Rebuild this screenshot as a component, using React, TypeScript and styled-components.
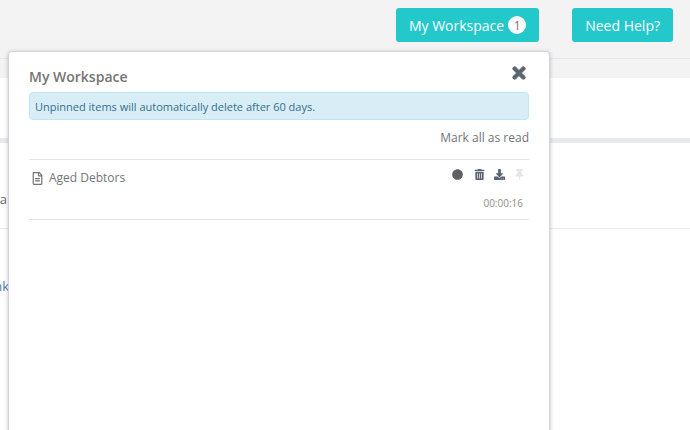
import React from 'react'
import styled, { createGlobalStyle } from 'styled-components'
import { FaCircle, FaDownload, FaRegFileAlt, FaThumbtack, FaTimes, FaTrashAlt } from 'react-icons/fa'

const GlobalStyle = createGlobalStyle`
  html, body {
    margin: 0;
    padding: 0;
    height: 100%;
    overflow: hidden;
    background: #fff;
    font-family: "Open Sans", "Liberation Sans", sans-serif;
  }
`

const Page = styled.div`
  position: relative;
  width: 690px;
  height: 430px;
  overflow: hidden;
`

const TopBar = styled.header`
  display: flex;
  justify-content: flex-end;
  align-items: flex-start;
  gap: 33px;
  box-sizing: border-box;
  height: 59px;
  padding: 8px 17px 0 0;
  background: #f3f3f4;
  border-bottom: 1px solid #e7e7e9;
`

const SubBar = styled.div`
  height: 19px;
  background: #f3f3f4;
`

const TopButton = styled.button`
  display: flex;
  align-items: center;
  gap: 4px;
  height: 34px;
  padding: 0 13px;
  border: none;
  border-radius: 3px;
  background: #23c8cb;
  color: #fff;
  font: 14px "Open Sans", sans-serif;
`

const Count = styled.span`
  display: flex;
  align-items: center;
  justify-content: center;
  width: 18px;
  height: 18px;
  border-radius: 50%;
  background: #fff;
  color: #6f7479;
  font-size: 12px;
`

const Band = styled.section`
  height: 60px;
`

const Strip = styled.div`
  height: 5px;
  background: #e6e9ed;
`

const BackRow = styled.div`
  display: flex;
  box-sizing: border-box;
  width: 100%;
  height: 86px;
  padding-top: 47px;
  border-bottom: 1px solid #e7eaec;
`

const ClippedCell = styled.div<{ $blue?: boolean }>`
  display: flex;
  justify-content: flex-end;
  width: ${p => (p.$blue ? 9 : 7)}px;
  white-space: nowrap;
  font-size: 13px;
  line-height: 18px;
  color: ${p => (p.$blue ? '#4a7db5' : '#676a6c')};
`

const LinkRow = styled.div`
  display: flex;
  padding-top: 48px;
`

const Popup = styled.aside`
  position: absolute;
  left: 8px;
  top: 51px;
  box-sizing: border-box;
  width: 542px;
  height: 400px;
  padding: 0 20px;
  background: #fff;
  border-radius: 4px;
  border: 1px solid #d3d4d9;
  box-shadow: 0 1px 4px rgba(90, 90, 110, 0.35);
`

const PopupHeader = styled.div`
  display: flex;
  justify-content: space-between;
  align-items: flex-start;
  height: 40px;
  padding-top: 15px;
  box-sizing: border-box;
`

const Title = styled.h3`
  margin: 0;
  font-size: 14px;
  line-height: 19px;
  font-weight: 600;
  color: #767474;
`

const CloseIcon = styled(FaTimes)`
  width: 16px;
  height: 18px;
  margin: -3px 2px 0 0;
  color: #5d6670;
  stroke: #5d6670;
  stroke-width: 30px;
`

const Notice = styled.div`
  box-sizing: border-box;
  height: 28px;
  padding: 0 5px;
  display: flex;
  align-items: center;
  background: #d9edf7;
  border: 1px solid #bce8f1;
  border-radius: 4px;
  color: #31708f;
  font-size: 11px;
`

const MarkRead = styled.div`
  text-align: right;
  margin-top: 9px;
  height: 30px;
  font-size: 12px;
  line-height: 18px;
  color: #6f7479;
`

const Item = styled.div`
  box-sizing: border-box;
  height: 61px;
  padding: 9px 6px 0 3px;
  border-top: 1px solid #e4e4e4;
  border-bottom: 1px solid #e4e4e4;
`

const ItemTop = styled.div`
  display: flex;
  justify-content: space-between;
  align-items: flex-start;
`

const ItemName = styled.div`
  display: flex;
  align-items: center;
  gap: 6px;
  font-size: 12px;
  line-height: 18px;
  color: #72757a;
  svg {
    width: 11px;
    height: 13px;
  }
`

const Actions = styled.div`
  display: flex;
  align-items: center;
  gap: 9px;
  height: 12px;
  margin: -1px -2px 0 0;
`

const ActionIcon = styled.span<{ $muted?: boolean }>`
  display: flex;
  color: ${p => (p.$muted ? '#e6e6e6' : '#596373')};
  svg {
    width: 11px;
    height: 11px;
  }
`

const StatusDot = styled(ActionIcon)`
  margin-right: 2px;
  color: #5f6064;
`

const Elapsed = styled.div`
  margin-top: 9px;
  text-align: right;
  font-size: 10px;
  line-height: 14px;
  color: #8f8d8a;
`

export default function App() {
  return (
    <Page>
      <GlobalStyle />
      <TopBar>
        <TopButton>
          My Workspace <Count>1</Count>
        </TopButton>
        <TopButton>Need Help?</TopButton>
      </TopBar>
      <SubBar />
      <Band />
      <Strip />
      <BackRow>
        <ClippedCell>Data</ClippedCell>
      </BackRow>
      <LinkRow>
        <ClippedCell $blue>Link</ClippedCell>
      </LinkRow>

      <Popup>
        <PopupHeader>
          <Title>My Workspace</Title>
          <CloseIcon />
        </PopupHeader>
        <Notice>Unpinned items will automatically delete after 60 days.</Notice>
        <MarkRead>Mark all as read</MarkRead>
        <Item>
          <ItemTop>
            <ItemName>
              <FaRegFileAlt />
              Aged Debtors
            </ItemName>
            <Actions>
              <StatusDot><FaCircle /></StatusDot>
              <ActionIcon><FaTrashAlt /></ActionIcon>
              <ActionIcon><FaDownload /></ActionIcon>
              <ActionIcon $muted><FaThumbtack /></ActionIcon>
            </Actions>
          </ItemTop>
          <Elapsed>00:00:16</Elapsed>
        </Item>
      </Popup>
    </Page>
  )
}
